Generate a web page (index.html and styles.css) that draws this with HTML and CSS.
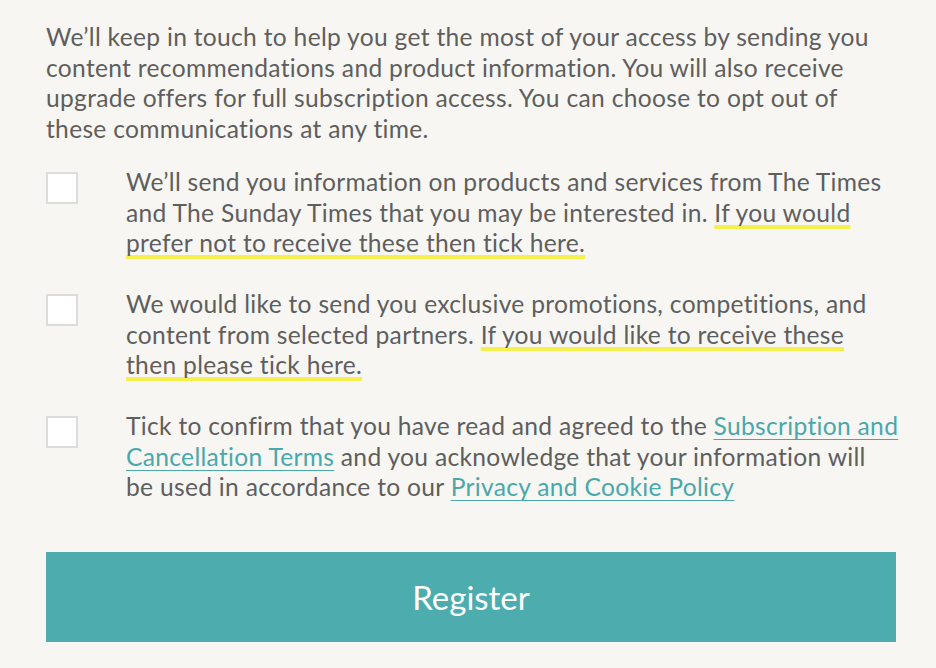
FILE: index.html
```html
<!DOCTYPE html>
<html lang="en">
<head>
  <meta charset="UTF-8">
  <meta name="viewport" content="width=device-width, initial-scale=1.0">
  <title>Register - The Times</title>
  <link rel="stylesheet" href="styles.css">
</head>
<body>
  <div class="container">
    <p class="intro">We’ll keep in touch to help you get the most of your access by sending you content recommendations and product information. You will also receive upgrade offers for full subscription access. You can choose to opt out of these communications at any time.</p>

    <form id="register-form">
      <label class="consent">
        <input type="checkbox" class="tick">
        <span class="consent-text">We’ll send you information on products and services from The Times and The Sunday Times that you may be interested in. <span class="marked">If you would prefer not to receive these then tick here.</span></span>
      </label>
      <label class="consent">
        <input type="checkbox" class="tick">
        <span class="consent-text">We would like to send you exclusive promotions, competitions, and content from selected partners. <span class="marked">If you would like to receive these then please tick here.</span></span>
      </label>
      <label class="consent consent-terms">
        <input type="checkbox" class="tick">
        <span class="consent-text">Tick to confirm that you have read and agreed to the <a href="#">Subscription and Cancellation Terms</a> and you acknowledge that your information will<br>be used in accordance to our <a href="#">Privacy and Cookie Policy</a></span>
      </label>
      <button type="submit" class="btn">Register</button>
    </form>
  </div>
</body>
</html>
```

FILE: styles.css
```css
body { font-family: Lato, "Open Sans", sans-serif; background: #f7f6f2; color: #5e5e5e; margin: 0; padding: 0; }
.container { width: 852px; padding: 22px 38px 0 46px; font-size: 24.6px; letter-spacing: 0.3px; line-height: 30.5px; }
.intro { margin: 0 0 23px; }
.consent { display: grid; grid-template-columns: 80px 1fr; margin-bottom: 30.5px; cursor: pointer; }
.consent-terms { margin-right: -8px; }
.tick { appearance: none; -webkit-appearance: none; width: 32px; height: 32px; margin: 5px 0 0; background: #fff; border: 2px solid #dcdcdc; box-sizing: border-box; }
.marked { text-decoration: underline 4px #f6f04e; text-underline-offset: 3px; text-decoration-skip-ink: none; }
.consent-text a { color: #49a8aa; text-decoration: underline 1px; text-underline-offset: 4px; }
.btn { display: block; width: 850px; height: 90px; margin-top: 49px; background: #4dacad; color: #fff; border: none; font-family: inherit; font-size: 33px; letter-spacing: 0; cursor: pointer; }
```
